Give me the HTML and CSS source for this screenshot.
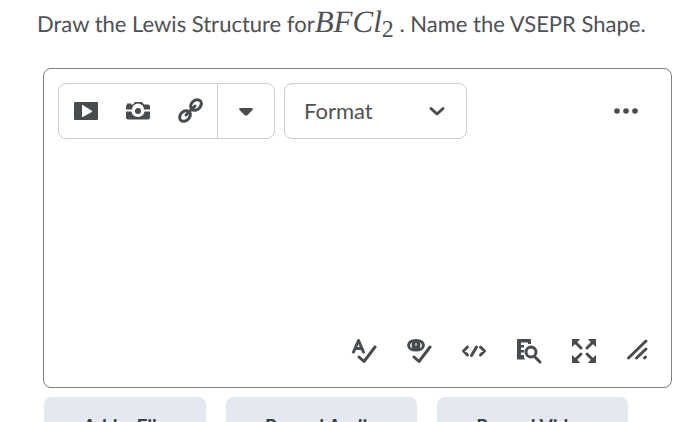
FILE: index.html
```
<!DOCTYPE html>
<html lang="en">
<head>
  <meta charset="UTF-8">
  <title>Question</title>
  <meta name="viewport" content="width=device-width, initial-scale=1.0">
  <link rel="stylesheet" href="styles.css">
</head>
<body>

<p class="question">Draw the Lewis Structure for<span class="formula"><i>BFCl</i><sub>2</sub></span> . Name the VSEPR Shape.</p>

<form class="answer" onsubmit="return false;">
  <div class="editor">
    <div class="toolbar">
      <div class="insert-group">
        <button type="button" class="tool" aria-label="Insert Stuff">
          <svg width="26" height="26" viewBox="0 0 26 26"><path fill-rule="evenodd" d="M2 4h22q1 0 1 1v16q0 1-1 1H2q-1 0-1-1V5q0-1 1-1zM9 7.500v11q0 .8.800.4l9-5q.8-.6 0-1.200l-9-5.600Q9 6.700 9 7.500z"/></svg>
        </button>
        <button type="button" class="tool" aria-label="Insert Image">
          <svg width="26" height="26" viewBox="0 0 26 26">
            <path d="M1 11.500V8q0-1 1-1V5.500h4V6.500h2l2-2.500h7l2 2.500h4q2 0 2 2v3h-6a6 6 0 0 0-12 0z"/>
            <path d="M1 13.500h5.500a6.600 6.600 0 0 0 13 0H25v6q0 2-2 2H3q-2 0-2-2z"/>
            <circle cx="13" cy="13" r="3"/>
          </svg>
        </button>
        <button type="button" class="tool" aria-label="Insert Quicklink">
          <svg class="line" width="26" height="26" viewBox="0 0 26 26">
            <ellipse cx="19" cy="7" rx="6" ry="4.600" transform="rotate(-45 19 7)"/>
            <ellipse cx="8" cy="18" rx="6" ry="4.600" transform="rotate(-45 8 18)"/>
            <path d="M9 17l9-9"/>
          </svg>
        </button>
        <button type="button" class="tool more-insert" aria-label="More insert options">
          <svg width="26" height="26" viewBox="0 0 26 26"><path d="M7 10h12q1.500.5.500 2l-5 5q-1.500 1-3 0l-5-5q-1-1.500.5-2z"/></svg>
        </button>
      </div>
      <div class="format">
        <select aria-label="Format">
          <option>Format</option>
        </select>
        <svg class="line chevron" width="18" height="18" viewBox="0 0 18 18"><path d="M3 6.500l6 5.500 6-5.500"/></svg>
      </div>
      <button type="button" class="tool overflow" aria-label="More actions">
        <svg width="26" height="26" viewBox="0 0 26 26"><circle cx="4" cy="13" r="2.800"/><circle cx="13" cy="13" r="2.800"/><circle cx="22" cy="13" r="2.800"/></svg>
      </button>
    </div>

    <textarea class="content" aria-label="Answer"></textarea>

    <div class="footer">
      <button type="button" class="tool" aria-label="Check Spelling">
        <svg class="line" width="26" height="26" viewBox="0 0 26 26"><path d="M2.500 14L7.500 2.500L12.500 14M4.500 10.500h6M8 19l5 4.500L24 9"/></svg>
      </button>
      <button type="button" class="tool" aria-label="Check Accessibility">
        <svg width="26" height="26" viewBox="0 0 26 26">
          <path fill-rule="evenodd" d="M1 7.200Q2 1 10 1t9 6.200Q18 13.500 10 13.500T1 7.200zM6 4.500Q4 6 4 7.500t2 2.800q-1-2.800 0-5.800zM14 4.500q1 3 0 5.800 2-1.300 2-2.800t-2-3zM9.500 5h1v3h-1z"/>
          <path class="line" d="M8 19l5 4.500L24 9"/>
        </svg>
      </button>
      <button type="button" class="tool" aria-label="Source Code">
        <svg class="line" width="26" height="26" viewBox="0 0 26 26"><path d="M6.500 9L2.500 13l4 4M19.500 9l4 4-4 4M15.500 9l-5 8.500"/></svg>
      </button>
      <button type="button" class="tool" aria-label="Preview">
        <svg width="26" height="26" viewBox="0 0 26 26">
          <path d="M2 1h12q1 0 1 1v4H12V4.500H5V7h3v2.500H5V12h3v2.500H5V17h3v2.500l1 2H2q-1 0-1-1V2q0-1 1-1z"/>
          <path class="line" d="M18.500 18.500L24 24"/>
          <circle class="line" cx="15" cy="14" r="5"/>
        </svg>
      </button>
      <button type="button" class="tool" aria-label="Fullscreen">
        <svg width="26" height="26" viewBox="0 0 26 26">
          <path d="M1 1h8L7 3.500 1 9zM25 1h-8l2 2.500L25 9zM1 25h8l-2-2.500L1 17zM25 25h-8l2-2.500 6-5.500z"/>
          <path class="line" d="M4 4l6 6M22 4l-6 6M4 22l6-6M22 22l-6-6"/>
        </svg>
      </button>
      <button type="button" class="tool" aria-label="Resize">
        <svg class="line" width="26" height="26" viewBox="0 0 26 26"><path d="M2.500 20L20 3M10.500 20L20 11M18.500 20l1-1"/></svg>
      </button>
    </div>
  </div>

  <div class="attachments">
    <button type="button">Add a File</button>
    <button type="button">Record Audio</button>
    <button type="button">Record Video</button>
  </div>
</form>

</body>
</html>
```
FILE: styles.css
```
* {
  box-sizing: border-box;
}
html {
  overflow: hidden;
}
body {
  margin: 0;
  background: #fff;
  color: #4f5154;
  font-family: Lato, "Liberation Sans", sans-serif;
  font-size: 22px;
  text-rendering: geometricPrecision;
}
button, select, textarea {
  font: inherit;
  color: inherit;
}
.question {
  margin: 0 28px 20px 37px;
  line-height: 48px;
  white-space: nowrap;
}
.formula {
  font-family: "Liberation Serif", serif;
  font-size: 31px;
  line-height: 1;
}
.formula sub {
  font-size: 24px;
  line-height: 1;
  vertical-align: -5px;
}
.answer {
  margin: 0 28px 0 43px;
}
.editor {
  border: 1px solid #7c7f84;
  border-radius: 8px;
  padding: 14px 5px 8px 14px;
}
.toolbar {
  display: flex;
  align-items: center;
  gap: 9px;
}
.insert-group {
  display: flex;
  height: 56px;
  padding-left: 1px;
  border: 1px solid #cdcfd2;
  border-radius: 8px;
}
.tool {
  display: flex;
  align-items: center;
  justify-content: center;
  width: 52px;
  padding: 0;
  border: none;
  background: none;
  cursor: pointer;
}
.tool svg {
  fill: #494c4e;
}
.tool svg.line, .line {
  fill: none;
  stroke: #494c4e;
  stroke-width: 3;
  stroke-linecap: round;
  stroke-linejoin: round;
}
.more-insert {
  width: 57px;
  margin-left: 1px;
  border-left: 1px solid #cdcfd2;
}
.format {
  position: relative;
  width: 183px;
}
.format select {
  display: block;
  width: 100%;
  height: 56px;
  padding: 0 19px 2px;
  border: 1px solid #cdcfd2;
  border-radius: 8px;
  background: #fff;
  appearance: none;
}
/* arrow drawn over the select */
.chevron {
  position: absolute;
  top: 19px;
  right: 21px;
  pointer-events: none;
}
.overflow {
  height: 56px;
  margin-left: auto;
  margin-right: 14px;
}
.content {
  display: block;
  width: 100%;
  height: 184px;
  border: none;
  outline: none;
  resize: none;
}
.footer {
  display: flex;
  justify-content: flex-end;
}
.footer .tool {
  width: 55px;
  height: 56px;
}
.attachments {
  display: flex;
  gap: 20px;
  margin: 9px 0 0 1px;
}
.attachments button {
  height: 56px;
  padding: 0 39px;
  border: none;
  border-radius: 8px;
  background: #e3e8f1;
  color: #3a4048;
  font-size: 19px;
  font-weight: 700;
}
```
